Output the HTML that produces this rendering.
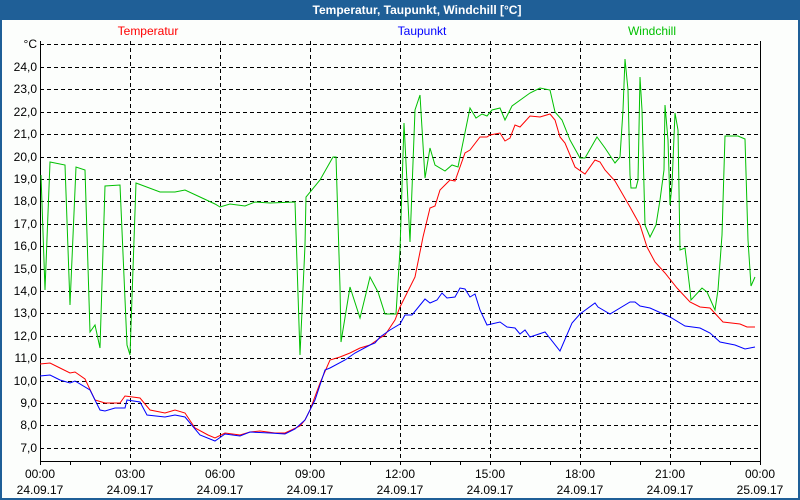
<!DOCTYPE html>
<html><head><meta charset="utf-8"><style>
html,body{margin:0;padding:0;width:800px;height:500px;overflow:hidden;background:#fcfefc}
svg{display:block}
text{font-family:"Liberation Sans","DejaVu Sans",sans-serif;font-size:12px}
</style></head><body>
<svg width="800" height="500" xmlns="http://www.w3.org/2000/svg">
<rect x="0" y="0" width="800" height="500" fill="#1f5f97"/>
<rect x="2" y="20" width="796" height="478" fill="#fcfefc"/>
<text x="417" y="14" fill="#fff" font-weight="bold" text-anchor="middle" style="font-size:12px">Temperatur, Taupunkt, Windchill [°C]</text>
<text x="148" y="35" fill="#ff0000" text-anchor="middle">Temperatur</text>
<text x="422" y="35" fill="#0000ff" text-anchor="middle">Taupunkt</text>
<text x="652" y="35" fill="#00c000" text-anchor="middle">Windchill</text>
<g stroke="#000" stroke-width="1" stroke-dasharray="4,3" fill="none">
<path d="M40 44.5H760M40 67.5H760M40 89.5H760M40 112.5H760M40 134.5H760M40 157.5H760M40 179.5H760M40 201.5H760M40 224.5H760M40 246.5H760M40 269.5H760M40 291.5H760M40 313.5H760M40 336.5H760M40 358.5H760M40 381.5H760M40 403.5H760M40 425.5H760M40 448.5H760"/>
<path d="M130.5 41V461M220.5 41V461M310.5 41V461M400.5 41V461M490.5 41V461M580.5 41V461M670.5 41V461"/>
</g>
<path d="M40.5 41V461.5H760.5V41" stroke="#000" fill="none"/>
<g stroke="#000"><path d="M40.5 461v4M70.5 461v4M100.5 461v4M130.5 461v4M160.5 461v4M190.5 461v4M220.5 461v4M250.5 461v4M280.5 461v4M310.5 461v4M340.5 461v4M370.5 461v4M400.5 461v4M430.5 461v4M460.5 461v4M490.5 461v4M520.5 461v4M550.5 461v4M580.5 461v4M610.5 461v4M640.5 461v4M670.5 461v4M700.5 461v4M730.5 461v4M760.5 461v4"/></g>
<g fill="#000" text-anchor="end">
<text x="37" y="48">°C</text>
<text x="37" y="71">24,0</text><text x="37" y="93">23,0</text><text x="37" y="116">22,0</text><text x="37" y="138">21,0</text><text x="37" y="161">20,0</text><text x="37" y="183">19,0</text><text x="37" y="205">18,0</text><text x="37" y="228">17,0</text><text x="37" y="250">16,0</text><text x="37" y="273">15,0</text><text x="37" y="295">14,0</text><text x="37" y="317">13,0</text><text x="37" y="340">12,0</text><text x="37" y="362">11,0</text><text x="37" y="385">10,0</text><text x="37" y="407">9,0</text><text x="37" y="429">8,0</text><text x="37" y="452">7,0</text>
</g>
<g fill="#000" text-anchor="middle">
<text x="40" y="478">00:00</text><text x="40" y="494">24.09.17</text>
<text x="130" y="478">03:00</text><text x="130" y="494">24.09.17</text>
<text x="220" y="478">06:00</text><text x="220" y="494">24.09.17</text>
<text x="310" y="478">09:00</text><text x="310" y="494">24.09.17</text>
<text x="400" y="478">12:00</text><text x="400" y="494">24.09.17</text>
<text x="490" y="478">15:00</text><text x="490" y="494">24.09.17</text>
<text x="580" y="478">18:00</text><text x="580" y="494">24.09.17</text>
<text x="670" y="478">21:00</text><text x="670" y="494">24.09.17</text>
<text x="760" y="478">00:00</text><text x="760" y="494">25.09.17</text>
</g>
<polyline fill="none" stroke="#00c000" stroke-width="1" points="41,175 45,290 50,162 65,165 70,305 76,167 85,170 90,332 95,325 100,348 105,186 120,185 127,345 130,355 136,183 160,192 175,192 185,190 200,197 215,204 220,207 230,204 245,206 255,202 270,203 295,202 300,355 305,245 306,197 320,180 333,157 336,157 340,287 341,342 350,287 360,318 370,277 378,292 385,314 396,314 400,250 404,123 410,242 415,110 420,95 425,178 430,148 435,165 445,171 452,165 458,167 470,108 476,118 482,114 487,116 492,110 500,108 505,120 512,106 530,93 540,88 550,90 555,112 562,120 570,140 580,158 585,158 597,137 605,148 615,163 620,157 623,110 625,59 628,90 630,175 631,188 636,188 638,180 640,77 642,110 645,225 650,237 656,225 660,200 664,170 665,105 668,140 670,205 672,185 675,113 678,130 680,250 685,248 690,290 691,300 702,288 707,292 715,310 718,290 722,235 725,136 738,136 745,139 748,240 751,286 755,277"/>
<polyline fill="none" stroke="#ff0000" stroke-width="1" points="40,364 50,363 60,368 70,373 75,372 85,379 95,400 105,403 120,403 125,396 140,398 150,410 165,413 175,410 185,413 195,428 208,435 215,438 225,433 240,435 250,432 260,431 275,433 285,433 300,426 305,420 310,410 320,383 330,360 340,357 350,353 360,348 370,345 380,338 385,335 395,320 400,307 405,297 415,277 423,237 430,208 435,206 440,190 447,183 450,180 455,181 460,167 465,153 470,150 480,137 487,137 490,135 500,133 505,141 510,138 515,125 520,127 530,116 540,117 550,114 555,120 560,137 565,143 575,167 585,174 595,160 600,162 605,170 615,181 630,207 640,225 647,247 655,262 665,273 677,288 690,302 700,307 710,308 723,322 740,324 747,327 755,327"/>
<polyline fill="none" stroke="#0000ff" stroke-width="1" points="40,376 50,375 60,380 70,383 75,381 90,390 100,410 105,411 115,408 125,408 127,400 140,402 147,415 165,417 175,415 185,417 200,435 215,441 225,434 240,436 250,432 270,433 285,434 295,429 305,420 315,400 325,370 330,368 345,360 355,353 370,345 375,343 380,337 390,330 400,324 405,315 412,315 425,299 430,303 437,300 442,293 447,298 455,297 460,288 465,289 470,297 475,294 480,310 487,325 500,322 507,327 515,328 520,334 525,330 530,337 545,332 560,351 572,323 580,314 595,303 598,307 610,314 630,302 635,302 640,306 650,308 670,317 685,326 700,328 710,333 720,342 735,345 745,349 755,347"/>
</svg>
</body></html>
